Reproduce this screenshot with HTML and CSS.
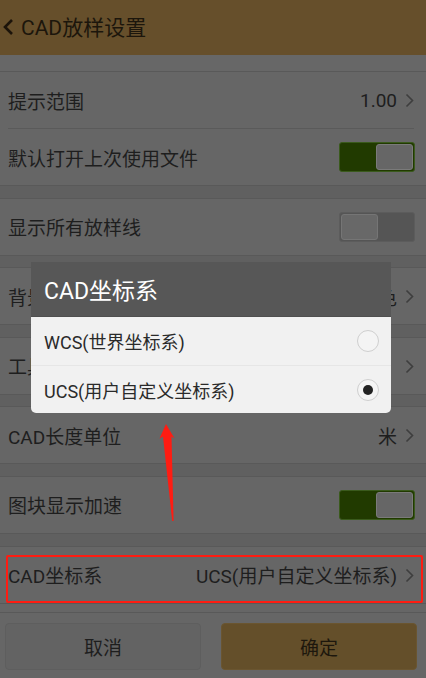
FILE: index.html
```html
<!DOCTYPE html>
<html lang="zh-CN">
<head>
<meta charset="utf-8">
<title>CAD放样设置</title>
<link rel="stylesheet" href="styles.css">
</head>
<body>
<div class="page">
  <header class="header">
    <svg class="back" width="12" height="18" viewBox="0 0 12 18"><polyline points="10,2 3,9 10,16" fill="none" stroke="#1c140a" stroke-width="2.6"/></svg>
    <span class="title">CAD放样设置</span>
  </header>
  <div class="band"></div>
  <div class="list">
    <section class="group">
      <div class="row"><span class="label">提示范围</span><span class="value">1.00</span><svg class="chev" width="9" height="15" viewBox="0 0 9 15"><polyline points="1.5,1.5 7.5,7.5 1.5,13.5" fill="none" stroke="#3e3e3e" stroke-width="1.6"/></svg></div>
      <div class="divider"></div>
      <div class="row"><span class="label">默认打开上次使用文件</span><span class="toggle on"><span class="knob"></span></span></div>
    </section>
    <section class="group">
      <div class="row"><span class="label">显示所有放样线</span><span class="toggle off"><span class="knob"></span></span></div>
    </section>
    <section class="group">
      <div class="row"><span class="label">背景颜色</span><span class="value">白色</span><svg class="chev" width="9" height="15" viewBox="0 0 9 15"><polyline points="1.5,1.5 7.5,7.5 1.5,13.5" fill="none" stroke="#3e3e3e" stroke-width="1.6"/></svg></div>
    </section>
    <section class="group">
      <div class="row"><span class="label">工具栏设置</span><span class="value"></span><svg class="chev" width="9" height="15" viewBox="0 0 9 15"><polyline points="1.5,1.5 7.5,7.5 1.5,13.5" fill="none" stroke="#3e3e3e" stroke-width="1.6"/></svg></div>
    </section>
    <section class="group">
      <div class="row"><span class="label">CAD长度单位</span><span class="value">米</span><svg class="chev" width="9" height="15" viewBox="0 0 9 15"><polyline points="1.5,1.5 7.5,7.5 1.5,13.5" fill="none" stroke="#3e3e3e" stroke-width="1.6"/></svg></div>
    </section>
    <section class="group">
      <div class="row"><span class="label">图块显示加速</span><span class="toggle on"><span class="knob"></span></span></div>
    </section>
    <section class="group">
      <div class="row"><span class="label">CAD坐标系</span><span class="value">UCS(用户自定义坐标系)</span><svg class="chev" width="9" height="15" viewBox="0 0 9 15"><polyline points="1.5,1.5 7.5,7.5 1.5,13.5" fill="none" stroke="#3e3e3e" stroke-width="1.6"/></svg></div>
    </section>
  </div>
  <footer class="footer">
    <button class="btn cancel">取消</button>
    <button class="btn ok">确定</button>
  </footer>

  <div class="dialog">
    <div class="dialog-title">CAD坐标系</div>
    <div class="option"><span>WCS(世界坐标系)</span><span class="radio"></span></div>
    <div class="option"><span>UCS(用户自定义坐标系)</span><span class="radio checked"></span></div>
  </div>

  <div class="highlight"></div>
  <svg class="arrow" width="426" height="678" viewBox="0 0 426 678"><polygon points="166,424 174.5,438.5 171.5,436.5 173.6,521 172.2,521 163,436.5 159.5,438.5" fill="#ff1c12"/></svg>
</div>
</body>
</html>
```

FILE: styles.css
```css
* { box-sizing: border-box; }
html, body { margin: 0; padding: 0; }
body {
  width: 426px;
  height: 678px;
  overflow: hidden;
  background: #666666;
  font-family: Roboto, "Noto Sans CJK SC", sans-serif;
  color: #1e1e1e;
}
.page {
  position: relative;
  width: 426px;
  height: 678px;
  display: flex;
  flex-direction: column;
}
.header {
  height: 55px;
  flex: none;
  background: #664f2b;
  display: flex;
  align-items: center;
  padding-left: 2px;
  gap: 7px;
}
.back { flex: none; margin-top: -2px; }
.title {
  font-size: 21px;
  color: #1c160c;
  margin-top: -3px;
}
.band {
  height: 17px;
  flex: none;
  background: #676767;
  border-bottom: 1px solid #595959;
}
.list {
  display: flex;
  flex-direction: column;
  gap: 11.6px;
  background: #606060;
}
.group {
  background: #666666;
  border-top: 1px solid #595959;
  border-bottom: 1px solid #595959;
}
.list .group:first-child { border-top: none; }
.row {
  height: 56px;
  display: flex;
  align-items: center;
  padding: 0 12px 0 8px;
  font-size: 19px;
}
.label { flex: 1; white-space: nowrap; }
.value { white-space: nowrap; margin-right: 8px; }
.chev { flex: none; margin-top: 1px; }
.divider {
  height: 1px;
  margin: 0 12px 0 8px;
  background: #5a5a5a;
}
.toggle {
  position: relative;
  width: 76px;
  height: 30px;
  border-radius: 3px;
  flex: none;
  margin-right: -1px;
}
.toggle.on { background: #213a00; border: 1px solid #3a5a1c; }
.toggle.off { background: #555555; border: 1px solid #5c5c5c; }
.knob {
  position: absolute;
  top: 1px;
  width: 37px;
  height: 26px;
  border-radius: 3px;
  background: #666666;
  border: 1px solid #7a7a7a;
}
.toggle.on .knob { right: 1px; }
.toggle.off .knob { left: 1px; background: #686868; border-color: #757575; }
.footer {
  margin-top: 8px;
  flex: 1;
  border-top: 1px solid #595959;
  background: #666666;
  display: flex;
  gap: 20px;
  padding: 10px 9px 0 5px;
  align-items: flex-start;
}
.btn {
  width: 196px;
  height: 47px;
  border-radius: 4px;
  font-family: Roboto, "Noto Sans CJK SC", sans-serif;
  font-size: 19px;
  color: #1e1e1e;
  padding: 0;
}
.btn.cancel { background: #636363; border: 1px solid #5e5e5e; }
.btn.ok { background: #644f2a; border: 1px solid #6a5530; color: #1d170d; }

.dialog {
  position: absolute;
  left: 31px;
  top: 262px;
  width: 360px;
  background: #f1f1f1;
  border-radius: 0 0 5px 5px;
  overflow: hidden;
}
.dialog-title {
  height: 55px;
  background: #575757;
  color: #ffffff;
  font-size: 23px;
  display: flex;
  align-items: center;
  padding-left: 13px;
  border-bottom: 1px solid #4f4f4f;
}
.option {
  height: 48px;
  display: flex;
  align-items: center;
  justify-content: space-between;
  padding: 0 12px 0 13px;
  font-size: 18px;
  color: #2a2a2a;
}
.option + .option { border-top: 1px solid #e6e6e6; }
.radio {
  width: 22px;
  height: 22px;
  border-radius: 50%;
  border: 1px solid #cfcfcf;
  background: #f4f4f4;
  position: relative;
}
.radio.checked::after {
  content: "";
  position: absolute;
  left: 5px;
  top: 5px;
  width: 10px;
  height: 10px;
  border-radius: 50%;
  background: #222222;
}
.highlight {
  position: absolute;
  left: 6px;
  top: 555px;
  width: 417px;
  height: 48px;
  border: 2.5px solid #ff1c12;
  border-radius: 2px;
}
.arrow {
  position: absolute;
  left: 0;
  top: 0;
  pointer-events: none;
}
```
